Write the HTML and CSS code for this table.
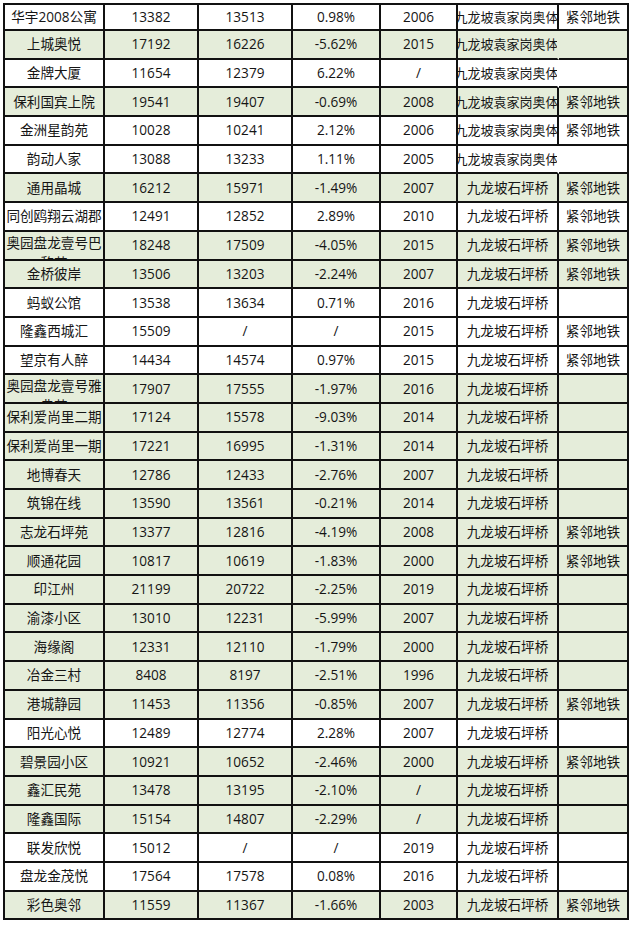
FILE: index.html
```html
<!DOCTYPE html>
<html lang="zh-CN">
<head>
<meta charset="utf-8">
<title>九龙坡小区房价表</title>
<link rel="stylesheet" href="styles.css">
</head>
<body>
<div class="sheet">
  <div class="row"><div class="c">华宇2008公寓</div><div class="c">13382</div><div class="c">13513</div><div class="c">0.98%</div><div class="c">2006</div><div class="c loc"><span>九龙坡袁家岗奥体</span></div><div class="c">紧邻地铁</div></div>
  <div class="row g"><div class="c">上城奥悦</div><div class="c">17192</div><div class="c">16226</div><div class="c">-5.62%</div><div class="c">2015</div><div class="c loc open"><span>九龙坡袁家岗奥体</span></div><div class="c"></div></div>
  <div class="row"><div class="c">金牌大厦</div><div class="c">11654</div><div class="c">12379</div><div class="c">6.22%</div><div class="c">/</div><div class="c loc open"><span>九龙坡袁家岗奥体</span></div><div class="c"></div></div>
  <div class="row g"><div class="c">保利国宾上院</div><div class="c">19541</div><div class="c">19407</div><div class="c">-0.69%</div><div class="c">2008</div><div class="c loc"><span>九龙坡袁家岗奥体</span></div><div class="c">紧邻地铁</div></div>
  <div class="row"><div class="c">金洲星韵苑</div><div class="c">10028</div><div class="c">10241</div><div class="c">2.12%</div><div class="c">2006</div><div class="c loc"><span>九龙坡袁家岗奥体</span></div><div class="c">紧邻地铁</div></div>
  <div class="row"><div class="c">韵动人家</div><div class="c">13088</div><div class="c">13233</div><div class="c">1.11%</div><div class="c">2005</div><div class="c loc open"><span>九龙坡袁家岗奥体</span></div><div class="c"></div></div>
  <div class="row g"><div class="c">通用晶城</div><div class="c">16212</div><div class="c">15971</div><div class="c">-1.49%</div><div class="c">2007</div><div class="c">九龙坡石坪桥</div><div class="c">紧邻地铁</div></div>
  <div class="row"><div class="c">同创鸥翔云湖郡</div><div class="c">12491</div><div class="c">12852</div><div class="c">2.89%</div><div class="c">2010</div><div class="c">九龙坡石坪桥</div><div class="c">紧邻地铁</div></div>
  <div class="row g"><div class="c wrap">奥园盘龙壹号巴黎苑</div><div class="c">18248</div><div class="c">17509</div><div class="c">-4.05%</div><div class="c">2015</div><div class="c">九龙坡石坪桥</div><div class="c">紧邻地铁</div></div>
  <div class="row g"><div class="c">金桥彼岸</div><div class="c">13506</div><div class="c">13203</div><div class="c">-2.24%</div><div class="c">2007</div><div class="c">九龙坡石坪桥</div><div class="c">紧邻地铁</div></div>
  <div class="row"><div class="c">蚂蚁公馆</div><div class="c">13538</div><div class="c">13634</div><div class="c">0.71%</div><div class="c">2016</div><div class="c">九龙坡石坪桥</div><div class="c"></div></div>
  <div class="row"><div class="c">隆鑫西城汇</div><div class="c">15509</div><div class="c">/</div><div class="c">/</div><div class="c">2015</div><div class="c">九龙坡石坪桥</div><div class="c">紧邻地铁</div></div>
  <div class="row"><div class="c">望京有人醉</div><div class="c">14434</div><div class="c">14574</div><div class="c">0.97%</div><div class="c">2015</div><div class="c">九龙坡石坪桥</div><div class="c">紧邻地铁</div></div>
  <div class="row g"><div class="c wrap">奥园盘龙壹号雅典苑</div><div class="c">17907</div><div class="c">17555</div><div class="c">-1.97%</div><div class="c">2016</div><div class="c">九龙坡石坪桥</div><div class="c"></div></div>
  <div class="row g"><div class="c">保利爱尚里二期</div><div class="c">17124</div><div class="c">15578</div><div class="c">-9.03%</div><div class="c">2014</div><div class="c">九龙坡石坪桥</div><div class="c"></div></div>
  <div class="row g"><div class="c">保利爱尚里一期</div><div class="c">17221</div><div class="c">16995</div><div class="c">-1.31%</div><div class="c">2014</div><div class="c">九龙坡石坪桥</div><div class="c"></div></div>
  <div class="row g"><div class="c">地博春天</div><div class="c">12786</div><div class="c">12433</div><div class="c">-2.76%</div><div class="c">2007</div><div class="c">九龙坡石坪桥</div><div class="c"></div></div>
  <div class="row g"><div class="c">筑锦在线</div><div class="c">13590</div><div class="c">13561</div><div class="c">-0.21%</div><div class="c">2014</div><div class="c">九龙坡石坪桥</div><div class="c"></div></div>
  <div class="row g"><div class="c">志龙石坪苑</div><div class="c">13377</div><div class="c">12816</div><div class="c">-4.19%</div><div class="c">2008</div><div class="c">九龙坡石坪桥</div><div class="c">紧邻地铁</div></div>
  <div class="row g"><div class="c">顺通花园</div><div class="c">10817</div><div class="c">10619</div><div class="c">-1.83%</div><div class="c">2000</div><div class="c">九龙坡石坪桥</div><div class="c">紧邻地铁</div></div>
  <div class="row g"><div class="c">印江州</div><div class="c">21199</div><div class="c">20722</div><div class="c">-2.25%</div><div class="c">2019</div><div class="c">九龙坡石坪桥</div><div class="c"></div></div>
  <div class="row g"><div class="c">渝漆小区</div><div class="c">13010</div><div class="c">12231</div><div class="c">-5.99%</div><div class="c">2007</div><div class="c">九龙坡石坪桥</div><div class="c"></div></div>
  <div class="row g"><div class="c">海缘阁</div><div class="c">12331</div><div class="c">12110</div><div class="c">-1.79%</div><div class="c">2000</div><div class="c">九龙坡石坪桥</div><div class="c"></div></div>
  <div class="row g"><div class="c">冶金三村</div><div class="c">8408</div><div class="c">8197</div><div class="c">-2.51%</div><div class="c">1996</div><div class="c">九龙坡石坪桥</div><div class="c"></div></div>
  <div class="row g"><div class="c">港城静园</div><div class="c">11453</div><div class="c">11356</div><div class="c">-0.85%</div><div class="c">2007</div><div class="c">九龙坡石坪桥</div><div class="c">紧邻地铁</div></div>
  <div class="row"><div class="c">阳光心悦</div><div class="c">12489</div><div class="c">12774</div><div class="c">2.28%</div><div class="c">2007</div><div class="c">九龙坡石坪桥</div><div class="c"></div></div>
  <div class="row g"><div class="c">碧景园小区</div><div class="c">10921</div><div class="c">10652</div><div class="c">-2.46%</div><div class="c">2000</div><div class="c">九龙坡石坪桥</div><div class="c">紧邻地铁</div></div>
  <div class="row g"><div class="c">鑫汇民苑</div><div class="c">13478</div><div class="c">13195</div><div class="c">-2.10%</div><div class="c">/</div><div class="c">九龙坡石坪桥</div><div class="c"></div></div>
  <div class="row g"><div class="c">隆鑫国际</div><div class="c">15154</div><div class="c">14807</div><div class="c">-2.29%</div><div class="c">/</div><div class="c">九龙坡石坪桥</div><div class="c"></div></div>
  <div class="row"><div class="c">联发欣悦</div><div class="c">15012</div><div class="c">/</div><div class="c">/</div><div class="c">2019</div><div class="c">九龙坡石坪桥</div><div class="c"></div></div>
  <div class="row"><div class="c">盘龙金茂悦</div><div class="c">17564</div><div class="c">17578</div><div class="c">0.08%</div><div class="c">2016</div><div class="c">九龙坡石坪桥</div><div class="c"></div></div>
  <div class="row g"><div class="c">彩色奥邻</div><div class="c">11559</div><div class="c">11367</div><div class="c">-1.66%</div><div class="c">2003</div><div class="c">九龙坡石坪桥</div><div class="c">紧邻地铁</div></div>
</div>
</body>
</html>
```

FILE: styles.css
```css
html, body {
  margin: 0;
  padding: 0;
  background: #ffffff;
}

body {
  font-family: "Open Sans", "Noto Sans CJK SC", sans-serif;
  font-size: 13.6px;
  color: #151515;
}

.sheet {
  margin: 3px 0 0 3px;
  width: 626px;
  box-sizing: border-box;
  border-top: 2px solid #111;
  border-left: 2px solid #111;
  display: grid;
  grid-template-rows: 26px;
  grid-auto-rows: 28.69px;
}

.row {
  display: grid;
  grid-template-columns: 100px 94px 94px 88px 77px 101px 70px;
  background: #ffffff;
}

.row.g {
  background: #e5edda;
}

.c {
  box-sizing: border-box;
  border-right: 2px solid #111;
  border-bottom: 2px solid #111;
  display: flex;
  align-items: center;
  justify-content: center;
  overflow: hidden;
  white-space: nowrap;
  line-height: 20px;
}

.c.wrap {
  white-space: normal;
  align-items: flex-start;
  text-align: center;
  padding-top: 1px;
}

.c.loc span {
  flex: none;
  font-size: 13px;
  margin-right: 2px;
}

.c.loc.open {
  border-right-color: transparent;
}
```
